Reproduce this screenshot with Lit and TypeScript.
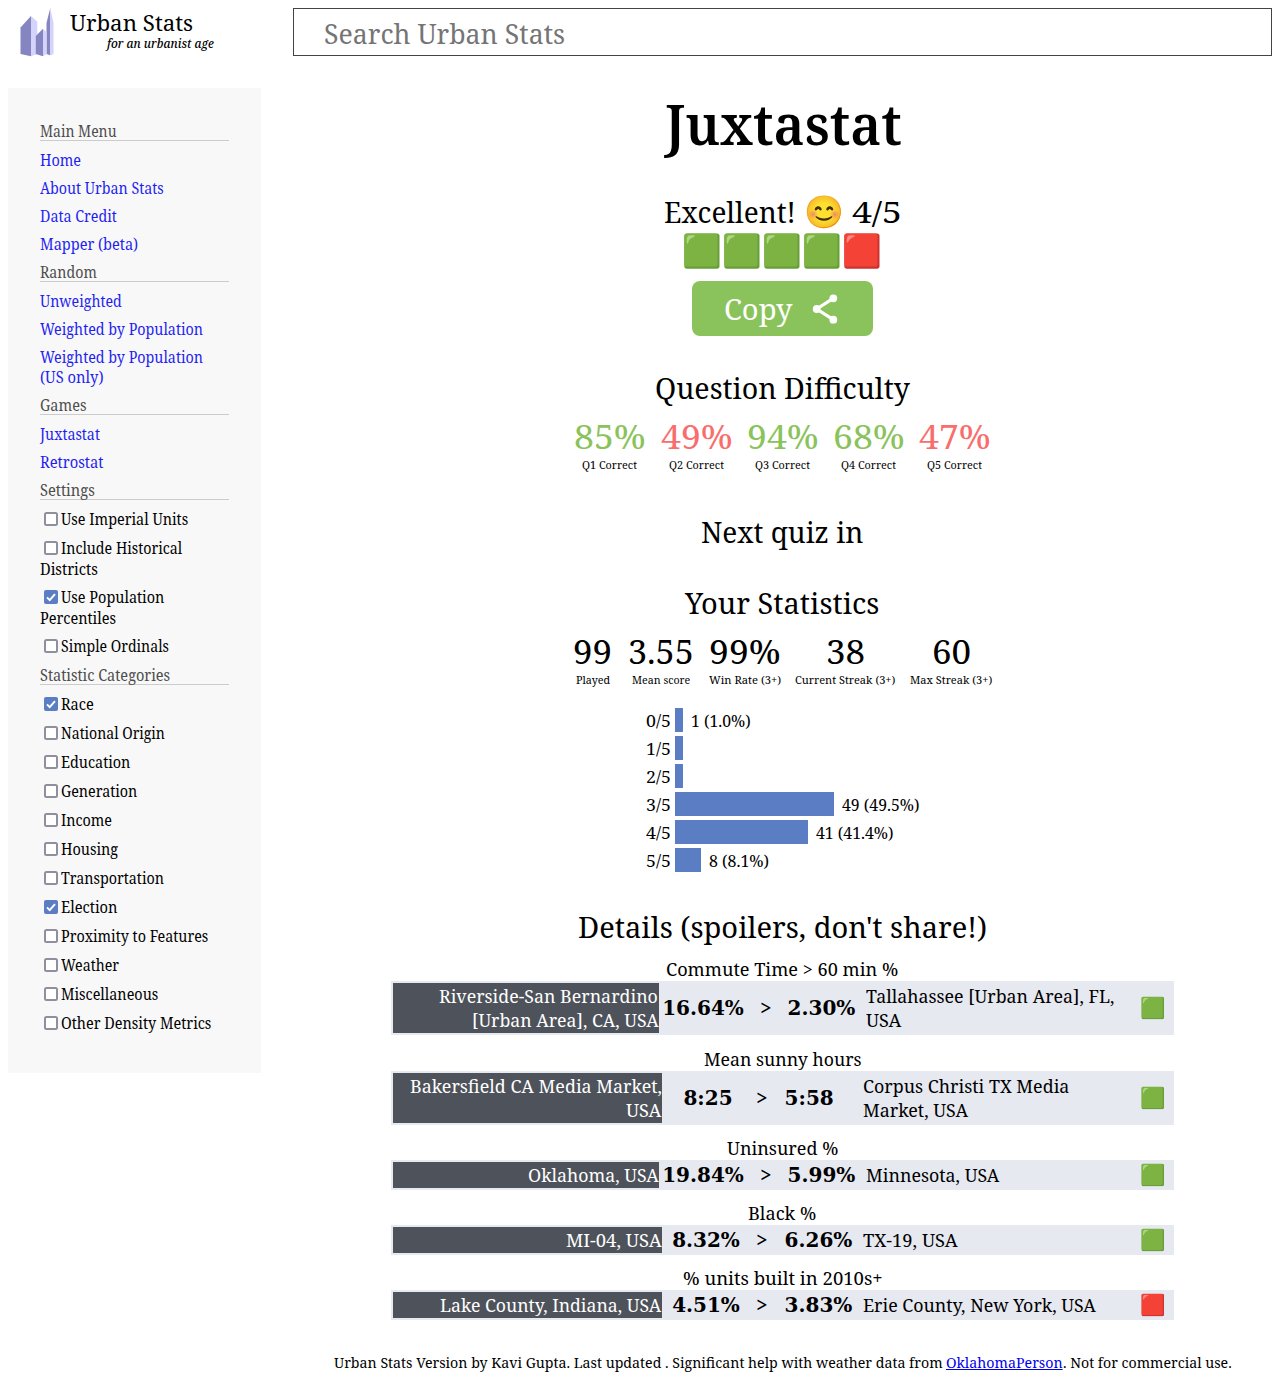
import { LitElement, html, css, svg } from "lit";

/** Inline text set to an exact width by condensing its glyphs. */
class FitText extends LitElement {
  static properties = { w: { type: Number } };
  declare w: number;
  static styles = css`
    :host { display: inline-block; white-space: nowrap; text-align: left; }
    .t { display: inline-block; transform-origin: 0 50%; }
    :host([underline]) .t { text-decoration: underline; }
  `;
  render() {
    return html`<span class="t"><slot></slot></span>`;
  }
  updated() {
    const t = this.renderRoot.querySelector(".t") as HTMLElement;
    this.style.width = `${this.w}px`;
    t.style.transform = `scaleX(${this.w / t.offsetWidth})`;
  }
}
customElements.define("fit-text", FitText);

const ft = (text: string, w: number) => html`<fit-text .w=${w + 0.2}>${text}</fit-text>`;

type Line = [string, number];
type Item = { lines: Line[]; checked?: boolean };
const link = (...lines: Line[]): Item => ({ lines });
const box = (checked: boolean, ...lines: Line[]): Item => ({ lines, checked });

const MENU: { head: Line; items: Item[] }[] = [
  {
    head: ["Main Menu", 76],
    items: [link(["Home", 41]), link(["About Urban Stats", 124]), link(["Data Credit", 77]), link(["Mapper (beta)", 98])],
  },
  {
    head: ["Random", 57],
    items: [
      link(["Unweighted", 82]),
      link(["Weighted by Population", 162.5]),
      link(["Weighted by Population", 162.5], ["(US only)", 63]),
    ],
  },
  { head: ["Games", 46], items: [link(["Juxtastat", 60]), link(["Retrostat", 63])] },
  {
    head: ["Settings", 55],
    items: [
      box(false, ["Use Imperial Units", 127]),
      box(false, ["Include Historical", 121], ["Districts", 58]),
      box(true, ["Use Population", 103], ["Percentiles", 76]),
      box(false, ["Simple Ordinals", 108]),
    ],
  },
  {
    head: ["Statistic Categories", 130],
    items: [
      box(true, ["Race", 33]),
      box(false, ["National Origin", 104]),
      box(false, ["Education", 69]),
      box(false, ["Generation", 76]),
      box(false, ["Income", 51]),
      box(false, ["Housing", 57]),
      box(false, ["Transportation", 103]),
      box(true, ["Election", 56]),
      box(false, ["Proximity to Features", 147]),
      box(false, ["Weather", 58]),
      box(false, ["Miscellaneous", 97]),
      box(false, ["Other Density Metrics", 150]),
    ],
  },
];

const DIFFICULTY: [string, string, boolean][] = [
  ["85%", "Q1 Correct", true],
  ["49%", "Q2 Correct", false],
  ["94%", "Q3 Correct", true],
  ["68%", "Q4 Correct", true],
  ["47%", "Q5 Correct", false],
];

const STATS: [string, number, string, number, number][] = [
  ["99", 39, "Played", 34, 40],
  ["3.55", 66, "Mean score", 58, 66],
  ["99%", 71, "Win Rate (3+)", 72, 71.5],
  ["38", 39, "Current Streak (3+)", 100, 100],
  ["60", 39, "Max Streak (3+)", 82, 81.5],
];

const BARS: [string, number, string, number][] = [
  ["0/5", 8, "1 (1.0%)", 59],
  ["1/5", 8, "", 0],
  ["2/5", 8, "", 0],
  ["3/5", 159, "49 (49.5%)", 77],
  ["4/5", 133, "41 (41.4%)", 77],
  ["5/5", 26, "8 (8.1%)", 59.5],
];

const DETAILS: { title: Line; a: Line[]; x: string; y: string; b: Line[]; ok: boolean; wide?: boolean }[] = [
  {
    title: ["Commute Time > 60 min %", 232],
    a: [["Riverside-San Bernardino", 219], ["[Urban Area], CA, USA", 186.5]],
    x: "16.64%", y: "2.30%",
    b: [["Tallahassee [Urban Area], FL,", 248], ["USA", 35]],
    ok: true, wide: true,
  },
  {
    title: ["Mean sunny hours", 157],
    a: [["Bakersfield CA Media Market,", 251.5], ["USA", 35]],
    x: "8:25", y: "5:58",
    b: [["Corpus Christi TX Media", 206.5], ["Market, USA", 104.5]],
    ok: true,
  },
  {
    title: ["Uninsured %", 111],
    a: [["Oklahoma, USA", 130.5]],
    x: "19.84%", y: "5.99%",
    b: [["Minnesota, USA", 133]],
    ok: true, wide: true,
  },
  { title: ["Black %", 68], a: [["MI-04, USA", 95]], x: "8.32%", y: "6.26%", b: [["TX-19, USA", 94.5]], ok: true },
  {
    title: ["% units built in 2010s+", 199],
    a: [["Lake County, Indiana, USA", 221]],
    x: "4.51%", y: "3.83%",
    b: [["Erie County, New York, USA", 232.5]],
    ok: false,
  },
];

class AppRoot extends LitElement {
  static styles = css`
    * { box-sizing: border-box; }
    :host {
      display: block; width: 1280px; height: 1380px; overflow: hidden; background: #fff; color: #000;
      font-family: "Noto Serif", "Liberation Serif", serif; font-size: 15.4px; line-height: 20px;
    }
    .page { display: grid; grid-template-columns: 253px 979px; column-gap: 32px; padding: 8px 8px 0; }
    .logo { display: flex; height: 80px; padding-left: 10px; }
    .mark { width: 40px; height: 50px; margin-right: 12px; flex: none; }
    .brand { display: flex; flex-direction: column; }
    .name { font-size: 22.5px; line-height: 30px; height: 28px; white-space: nowrap; }
    .tag { font-size: 12px; line-height: 16px; font-style: italic; font-weight: 500; padding-left: 37px; white-space: nowrap; }
    .search { height: 48px; margin-bottom: 32px; border: 1px solid #444; padding-left: 30px; font-size: 28px; line-height: 48px; color: #757575; }
    .side { height: 985px; background: #f8f8f8; padding: 33px 32px 31px; }
    .head { height: 20px; border-bottom: 1px solid #ccc; margin-bottom: 8px; color: #4d4d4d; line-height: 21px; white-space: nowrap; }
    .item + .head { margin-top: 9px; }
    .item { margin-bottom: 8px; }
    .ln { height: 20px; white-space: nowrap; display: flex; align-items: flex-start; line-height: 23px; }
    .check .ln:first-child { height: 21px; }
    .link { color: #1f1ff2; }
    .cb { width: 14px; height: 14px; margin: 0 3px 0 4px; flex: none; align-self: center; }
    .main { display: flex; flex-direction: column; align-items: center; margin-top: -4px; }
    .title { font-size: 56.5px; line-height: 80px; height: 79px; font-weight: 560; padding-left: 2px; }
    .verdict { display: flex; align-items: center; margin-top: 29px; height: 40px; line-height: 40px; font-size: 29px; padding-left: 1px; }
    .emo { font-family: "Noto Color Emoji", sans-serif; font-size: 32px; }
    .verdict .emo { margin: 0 8px; }
    .squares { height: 38px; line-height: 38px; display: flex; letter-spacing: 0.16px; margin-right: 1px; }
    .copy {
      margin-top: 11px; width: 181px; height: 55px; border-radius: 8px; background: #8ac35b; color: #fff;
      font-size: 29px; line-height: 56px; display: flex; padding-left: 32px;
    }
    .share { width: 32px; height: 32px; margin: 12px 0 0 18px; }
    .h2 { font-size: 29px; line-height: 40px; height: 40px; }
    .qd { margin-top: 32px; }
    .next { margin-top: 39px; height: 39px; line-height: 39px; }
    .ys { margin-top: 32px; height: 39px; line-height: 39px; }
    .cells { display: flex; margin-top: 8px; }
    .cell { text-align: center; white-space: nowrap; display: flex; flex-direction: column; align-items: center; }
    .diff .cell { width: 86.3px; }
    .stats { gap: 15px; margin-top: 9px; }
    .num { font-size: 33px; line-height: 42px; height: 40px; }
    .lab { font-size: 11px; line-height: 17px; height: 17px; }
    .good { color: #8ac35b; }
    .bad { color: #f96d6d; }
    .chart { margin-top: 20px; width: 274px; display: flex; flex-direction: column; gap: 4px; padding-bottom: 4px; }
    .row { display: flex; height: 24px; line-height: 26px; font-size: 16px; white-space: nowrap; }
    .bar { background: #5a7dc3; margin: 0 8px 0 4px; }
    .det { margin-top: 31px; margin-bottom: 10px; }
    .sub { font-size: 18.6px; line-height: 24px; height: 24px; }
    .cmp {
      width: 783px; background: #e6e9f0; border: 2px solid #e6e9f0; display: grid; align-items: center;
      grid-template-columns: 269px 80px 42px 78px 1fr 32px; margin-bottom: 11px;
      font-size: 18.6px; line-height: 24px; white-space: nowrap;
    }
    .det + .sub + .cmp { margin-bottom: 12px; }
    .cmp.wide { grid-template-columns: 266px 88px 40px 78px 1fr 32px; }
    .a { background: #4e525a; color: #fff; padding: 1px 0.7px 1px 0; display: flex; flex-direction: column; align-items: flex-end; }
    .b { padding-left: 1.4px; display: flex; flex-direction: column; align-items: flex-start; }
    .v { font-family: "DejaVu Serif", serif; font-weight: 700; font-size: 20px; }
    .v.x { text-align: center; padding-left: 8px; }
    .v.x.time { padding-left: 12px; }
    .wide .v.x { padding-left: 0; }
    .v.y { padding-left: 0.6px; }
    .gt { font-weight: 800; text-align: center; font-size: 20px; padding-right: 2px; }
    .sq { font-family: "Noto Color Emoji", sans-serif; font-size: 20.5px; }
    .foot { margin-top: 21px; height: 20px; display: flex; white-space: nowrap; font-size: 15.2px; }
    .foot .lnk { color: #0000ee; margin-left: 4px; }
  `;

  checkbox(on: boolean) {
    return html`<svg class="cb" viewBox="0 0 14 14">${on
      ? svg`<rect width="14" height="14" rx="2" fill="#5a7dc3"/><path d="M3 7.4 5.7 10.1 11 4.2" fill="none" stroke="#fff" stroke-width="2"/>`
      : svg`<rect x="1" y="1" width="12" height="12" rx="1.5" fill="#fff" stroke="#8f8f9d" stroke-width="2"/>`}</svg>`;
  }

  item(i: Item) {
    const isBox = i.checked !== undefined;
    return html`<div class="item ${isBox ? "check" : "link"}">
      ${i.lines.map(([t, w], n) => html`<div class="ln">${isBox && n === 0 ? this.checkbox(!!i.checked) : ""}${ft(t, w)}</div>`)}
    </div>`;
  }

  render() {
    return html`<div class="page">
      <div>
        <div class="logo">
          <svg class="mark" viewBox="0 0 40 50">
            <path d="M2.5 19.5 13 8v40.3L2.5 46z" fill="#8585c1"/><path d="M13 8l6.3 5.7V46L13 48.3z" fill="#d4d3fb"/>
            <path d="M28.5 15 32.3 0V47.3L28.5 46z" fill="#8585c1"/><path d="M32.3 0l3.2 15v31l-3.2 1.6z" fill="#d4d3fb"/>
            <path d="M17.8 28 25 20.7V48.3L17.8 46z" fill="#8585c1"/><path d="M25 20.7l3.6 3.5V46L25 48.3z" fill="#d4d3fb"/>
          </svg>
          <div class="brand"><div class="name">${ft("Urban Stats", 122.5)}</div><div class="tag">${ft("for an urbanist age", 106.5)}</div></div>
        </div>
        <div class="side">
          ${MENU.map((m) => html`<div class="head">${ft(...m.head)}</div>${m.items.map((i) => this.item(i))}`)}
        </div>
      </div>
      <div>
        <div class="search">${ft("Search Urban Stats", 241)}</div>
        <div class="main">
          <div class="title">${ft("Juxtastat", 237)}</div>
          <div class="verdict">${ft("Excellent!", 132)}<span class="emo">😊</span>${ft("4/5", 50)}</div>
          <div class="squares emo">🟩🟩🟩🟩🟥</div>
          <div class="copy">${ft("Copy", 68)}
            <svg class="share" viewBox="0 0 32 32" fill="#fff" stroke="#fff">
              <path d="M23.3 5.3 6.7 16 23.3 26.7" fill="none" stroke-width="3.2"/>
              <circle cx="23.3" cy="5.3" r="3.9" stroke="none"/><circle cx="6.7" cy="16" r="3.9" stroke="none"/><circle cx="23.3" cy="26.7" r="3.9" stroke="none"/>
            </svg>
          </div>
          <div class="h2 qd">${ft("Question Difficulty", 255)}</div>
          <div class="cells diff">
            ${DIFFICULTY.map(([n, l, g]) => html`<div class="cell"><div class="num ${g ? "good" : "bad"}">${ft(n, 71)}</div><div class="lab">${ft(l, 55)}</div></div>`)}
          </div>
          <div class="h2 next">${ft("Next quiz in", 162)}</div>
          <div class="h2 ys">${ft("Your Statistics", 194)}</div>
          <div class="cells stats">
            ${STATS.map(([n, nw, l, lw, w]) => html`<div class="cell" style="width:${w}px"><div class="num">${ft(n, nw)}</div><div class="lab">${ft(l, lw)}</div></div>`)}
          </div>
          <div class="chart">
            ${BARS.map(([l, w, t, tw]) => html`<div class="row">${ft(l, 25.3)}<div class="bar" style="width:${w}px"></div>${t ? ft(t, tw) : ""}</div>`)}
          </div>
          <div class="h2 det">${ft("Details (spoilers, don't share!)", 409)}</div>
          ${DETAILS.map((d) => html`
            <div class="sub">${ft(...d.title)}</div>
            <div class="cmp ${d.wide ? "wide" : ""}">
              <div class="a">${d.a.map((l) => ft(...l))}</div>
              <div class="v x ${d.x.includes(":") ? "time" : ""}">${d.x}</div><div class="gt">&gt;</div><div class="v y">${d.y}</div>
              <div class="b">${d.b.map((l) => ft(...l))}</div>
              <div class="sq">${d.ok ? "🟩" : "🟥"}</div>
            </div>`)}
          <div class="foot">
            ${ft("Urban Stats Version by Kavi Gupta. Last updated . Significant help with weather data from", 608)}<fit-text class="lnk" underline .w=${117}>OklahomaPerson</fit-text>${ft(". Not for commercial use.", 168.5)}
          </div>
        </div>
      </div>
    </div>`;
  }
}
customElements.define("app-root", AppRoot);
